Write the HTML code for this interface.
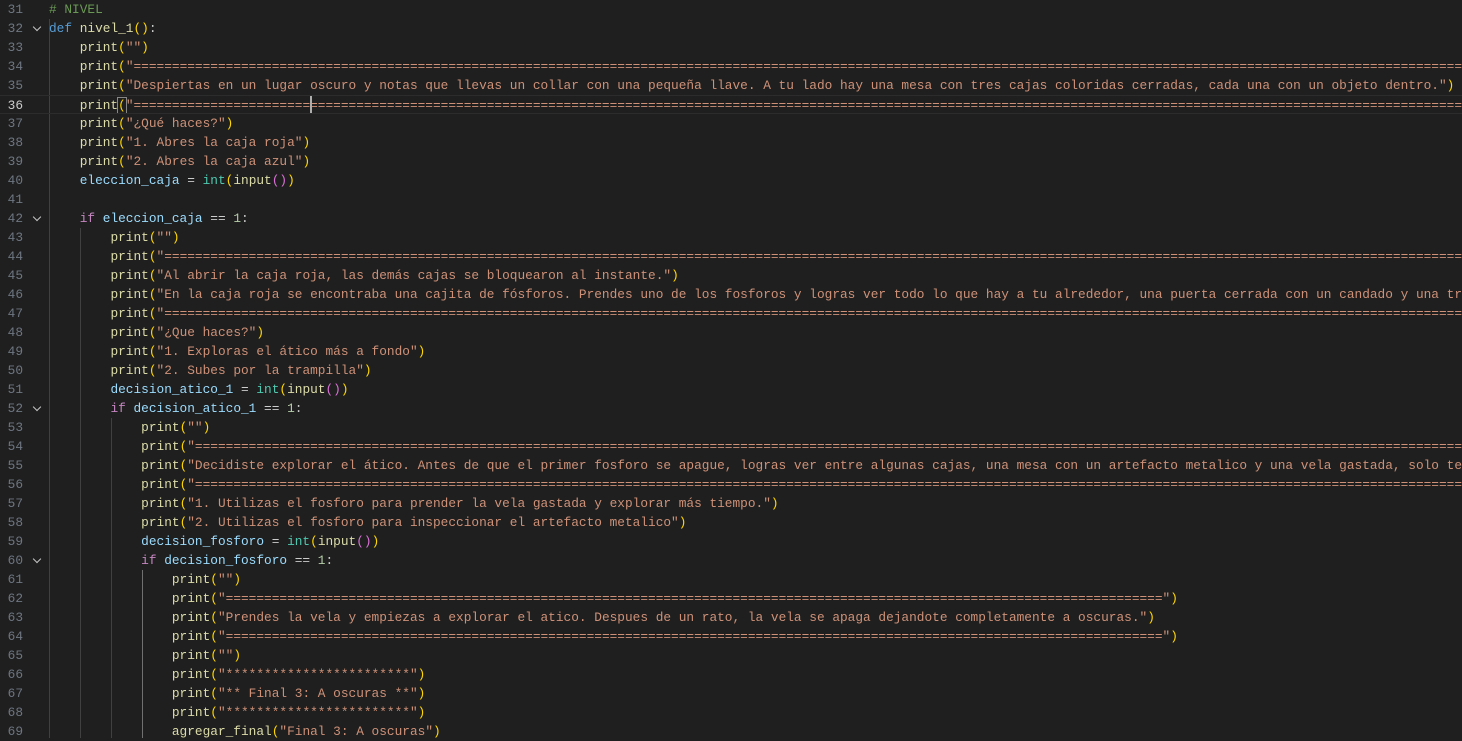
<!DOCTYPE html>
<html><head><meta charset="utf-8"><style>
body{margin:0;width:1462px;height:738px;background:#1f1f1f;overflow:hidden;position:relative;font-family:"Liberation Mono",monospace;font-size:12.8px}
.l{position:absolute;left:0;height:19px;line-height:19px;width:1462px;white-space:pre;overflow:hidden}
.n{position:absolute;left:0;width:23px;text-align:right;color:#6e7681}
.c{position:absolute;left:49px;color:#cccccc}
.cur{box-sizing:border-box;border-top:1px solid #2c2c2c;border-bottom:1px solid #2c2c2c}
.cur .n{color:#cccccc}
.f{position:absolute;left:34px;width:5px;height:5px;border-right:1.3px solid #c5c5c5;border-bottom:1.3px solid #c5c5c5;transform:rotate(45deg);top:5px}
.g{position:absolute;width:1px;background:#404040}
.k{color:#569cd6}.p{color:#c586c0}.fn{color:#dcdcaa}.s{color:#ce9178}.v{color:#9cdcfe}.t{color:#4ec9b0}.num{color:#b5cea8}.cm{color:#6a9955}
.y{color:#ffd700}.m{color:#da70d6}.b{color:#179fff}
</style></head><body>
<div class="g" style="left:49px;top:19px;height:719px"></div>
<div class="g" style="left:80px;top:228px;height:510px"></div>
<div class="g" style="left:111px;top:418px;height:320px"></div>
<div class="g" style="left:142px;top:570px;height:168px;background:#707070"></div>
<div id="x"></div>
<script>
const eq=n=>'='.repeat(n);
const P=(ind,s,close=true)=>' '.repeat(ind)+'<span class="fn">print</span><span class="y">(</span><span class="s">"'+s+'"</span><span class="y">)</span>';
const L=[
['<span class="cm"># NIVEL</span>'],
['<span class="k">def</span> <span class="fn">nivel_1</span><span class="y">()</span>:',1],
[P(4,'')],
[P(4,eq(200))],
[P(4,'Despiertas en un lugar oscuro y notas que llevas un collar con una pequeña llave. A tu lado hay una mesa con tres cajas coloridas cerradas, cada una con un objeto dentro.')],
['    <span class="fn">print</span><span class="y" style="outline:1px solid #888">(</span><span class="s">"'+eq(200)+'"</span>'],
[P(4,'¿Qué haces?')],
[P(4,'1. Abres la caja roja')],
[P(4,'2. Abres la caja azul')],
['    <span class="v">eleccion_caja</span> = <span class="t">int</span><span class="y">(</span><span class="fn">input</span><span class="m">()</span><span class="y">)</span>'],
[''],
['    <span class="p">if</span> <span class="v">eleccion_caja</span> == <span class="num">1</span>:',1],
[P(8,'')],
[P(8,eq(200))],
[P(8,'Al abrir la caja roja, las demás cajas se bloquearon al instante.')],
[P(8,'En la caja roja se encontraba una cajita de fósforos. Prendes uno de los fosforos y logras ver todo lo que hay a tu alrededor, una puerta cerrada con un candado y una trampilla.')],
[P(8,eq(200))],
[P(8,'¿Que haces?')],
[P(8,'1. Exploras el ático más a fondo')],
[P(8,'2. Subes por la trampilla')],
['        <span class="v">decision_atico_1</span> = <span class="t">int</span><span class="y">(</span><span class="fn">input</span><span class="m">()</span><span class="y">)</span>'],
['        <span class="p">if</span> <span class="v">decision_atico_1</span> == <span class="num">1</span>:',1],
[P(12,'')],
[P(12,eq(200))],
[P(12,'Decidiste explorar el ático. Antes de que el primer fosforo se apague, logras ver entre algunas cajas, una mesa con un artefacto metalico y una vela gastada, solo tes queda un fosforo.')],
[P(12,eq(200))],
[P(12,'1. Utilizas el fosforo para prender la vela gastada y explorar más tiempo.')],
[P(12,'2. Utilizas el fosforo para inspeccionar el artefacto metalico')],
['            <span class="v">decision_fosforo</span> = <span class="t">int</span><span class="y">(</span><span class="fn">input</span><span class="m">()</span><span class="y">)</span>'],
['            <span class="p">if</span> <span class="v">decision_fosforo</span> == <span class="num">1</span>:',1],
[P(16,'')],
[P(16,eq(122))],
[P(16,'Prendes la vela y empiezas a explorar el atico. Despues de un rato, la vela se apaga dejandote completamente a oscuras.')],
[P(16,eq(122))],
[P(16,'')],
[P(16,'*'.repeat(24))],
[P(16,'** Final 3: A oscuras **')],
[P(16,'*'.repeat(24))],
['                <span class="fn">agregar_final</span><span class="y">(</span><span class="s">"Final 3: A oscuras"</span><span class="y">)</span>'],
];
let h='';
L.forEach((r,i)=>{const n=31+i;h+='<div class="l'+(n==36?' cur':'')+'" style="top:'+(i*19)+'px"><span class="n">'+n+'</span>'+(r[1]?'<span class="f"></span>':'')+'<span class="c">'+r[0]+'</span></div>';});
document.getElementById('x').innerHTML=h;
</script>
<div style="position:absolute;left:310px;top:96px;width:2px;height:17px;background:#aeafad"></div>
</body></html>
